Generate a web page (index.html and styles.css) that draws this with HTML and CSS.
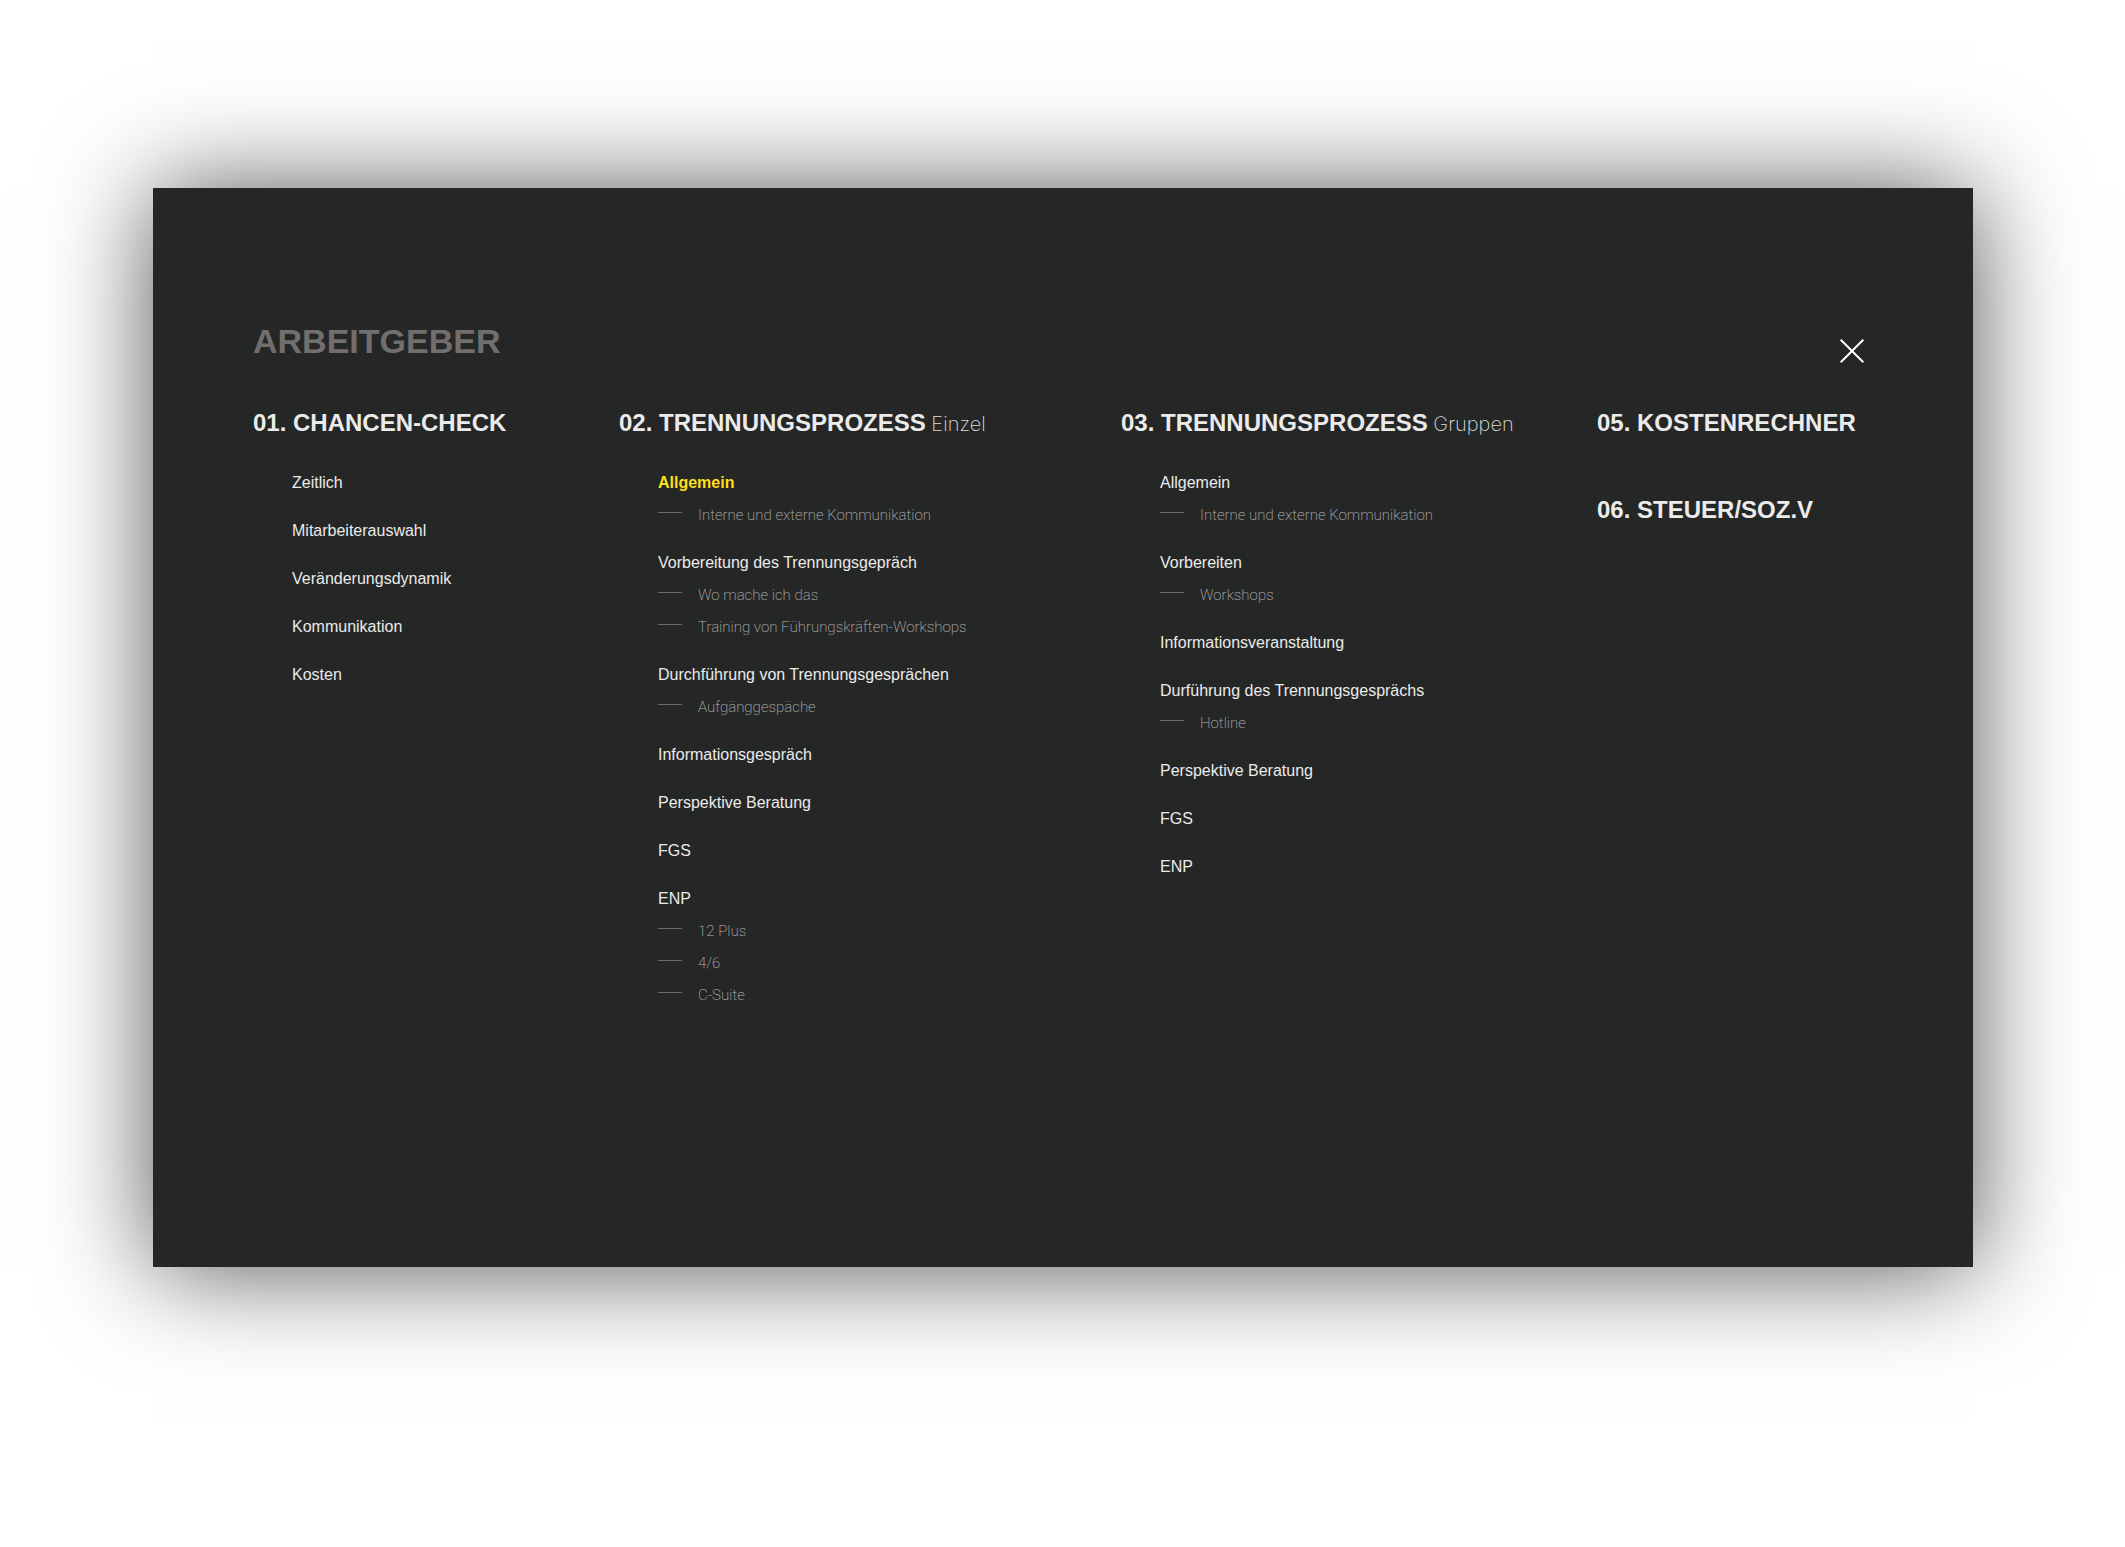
FILE: index.html
```html
<!DOCTYPE html>
<html lang="de">
<head>
<meta charset="utf-8">
<meta name="viewport" content="width=device-width, initial-scale=1">
<title>Arbeitgeber</title>
<link rel="stylesheet" href="styles.css">
</head>
<body>
<main class="panel">
  <header class="panel-header">
    <h1 class="title">ARBEITGEBER</h1>
    <button class="close" type="button" aria-label="Menü schließen">
      <svg class="close-icon" viewBox="0 0 24 24" aria-hidden="true"><path d="M0.7 0.7L23.3 23.3M23.3 0.7L0.7 23.3"/></svg>
    </button>
  </header>
  <nav class="menu">
    <section class="column">
      <h2 class="heading"><a href="#">01. CHANCEN-CHECK</a></h2>
      <ul class="items">
        <li><a href="#">Zeitlich</a></li>
        <li><a href="#">Mitarbeiterauswahl</a></li>
        <li><a href="#">Veränderungsdynamik</a></li>
        <li><a href="#">Kommunikation</a></li>
        <li><a href="#">Kosten</a></li>
      </ul>
    </section>
    <section class="column">
      <h2 class="heading"><a href="#">02. TRENNUNGSPROZESS<span class="variant"> Einzel</span></a></h2>
      <ul class="items">
        <li><a class="active" href="#">Allgemein</a>
          <ul class="subitems">
            <li><a href="#">Interne und externe Kommunikation</a></li>
          </ul>
        </li>
        <li><a href="#">Vorbereitung des Trennungsgepräch</a>
          <ul class="subitems">
            <li><a href="#">Wo mache ich das</a></li>
            <li><a href="#">Training von Führungskräften-Workshops</a></li>
          </ul>
        </li>
        <li><a href="#">Durchführung von Trennungsgesprächen</a>
          <ul class="subitems">
            <li><a href="#">Aufgänggespäche</a></li>
          </ul>
        </li>
        <li><a href="#">Informationsgespräch</a></li>
        <li><a href="#">Perspektive Beratung</a></li>
        <li><a href="#">FGS</a></li>
        <li><a href="#">ENP</a>
          <ul class="subitems">
            <li><a href="#">12 Plus</a></li>
            <li><a href="#">4/6</a></li>
            <li><a href="#">C-Suite</a></li>
          </ul>
        </li>
      </ul>
    </section>
    <section class="column">
      <h2 class="heading"><a href="#">03. TRENNUNGSPROZESS<span class="variant"> Gruppen</span></a></h2>
      <ul class="items">
        <li><a href="#">Allgemein</a>
          <ul class="subitems">
            <li><a href="#">Interne und externe Kommunikation</a></li>
          </ul>
        </li>
        <li><a href="#">Vorbereiten</a>
          <ul class="subitems">
            <li><a href="#">Workshops</a></li>
          </ul>
        </li>
        <li><a href="#">Informationsveranstaltung</a></li>
        <li><a href="#">Durführung des Trennungsgesprächs</a>
          <ul class="subitems">
            <li><a href="#">Hotline</a></li>
          </ul>
        </li>
        <li><a href="#">Perspektive Beratung</a></li>
        <li><a href="#">FGS</a></li>
        <li><a href="#">ENP</a></li>
      </ul>
    </section>
    <section class="column column-plain">
      <h2 class="heading"><a href="#">05. KOSTENRECHNER</a></h2>
      <h2 class="heading"><a href="#">06. STEUER/SOZ.V</a></h2>
    </section>
  </nav>
</main>
</body>
</html>
```
FILE: styles.css
```css
* {
  box-sizing: border-box;
}

body {
  display: flex;
  min-height: 100vh;
  margin: 0;
  padding: 188px 152px 280px 153px;
  background: #fff;
  color: #ebebeb;
  font: 16px/32px "Liberation Sans", Arial, sans-serif;
}

h1,
h2,
ul {
  margin: 0;
  padding: 0;
}

ul {
  list-style: none;
}

a {
  color: inherit;
  text-decoration: none;
}

.panel {
  flex: 1;
  padding: 131px 109px 100px 100px;
  background: #252726;
  box-shadow: 0 2px 100px rgba(0, 0, 0, 0.68);
}

.panel-header {
  display: flex;
  align-items: flex-end;
  justify-content: space-between;
  margin-bottom: 44px;
}

.title {
  color: #716e6d;
  font-size: 34px;
  line-height: 44px;
}

.close {
  width: 24px;
  height: 24px;
  padding: 0;
  border: 0;
  background: none;
  cursor: pointer;
}

.close-icon {
  display: block;
  width: 24px;
  height: 24px;
  fill: none;
  stroke: #fff;
  stroke-width: 2;
}

.menu {
  display: grid;
  grid-template-columns: 366fr 502fr 476fr 267fr;
}

.heading {
  font-size: 24px;
  line-height: 32px;
  white-space: nowrap;
}

.variant {
  color: #dcdcdc;
  font-family: Inter, "Liberation Sans", sans-serif;
  font-size: 20px;
  font-weight: 200;
  line-height: 20px;
}

.items {
  display: flex;
  flex-direction: column;
  gap: 16px;
  padding: 28px 0 0 39px;
}

.active {
  color: #ffdf1b;
  font-weight: 700;
}

.subitems {
  color: #b4b4b4;
  font-family: Roboto, "Liberation Sans", sans-serif;
  font-size: 15px;
  font-weight: 200;
}

.subitems li {
  display: flex;
  align-items: center;
  gap: 16px;
}

.subitems li::before {
  content: "";
  width: 24px;
  height: 1px;
  margin-bottom: 6px;
  background: #6b6c6b;
}

.column-plain {
  display: flex;
  flex-direction: column;
  gap: 55px;
}
```
